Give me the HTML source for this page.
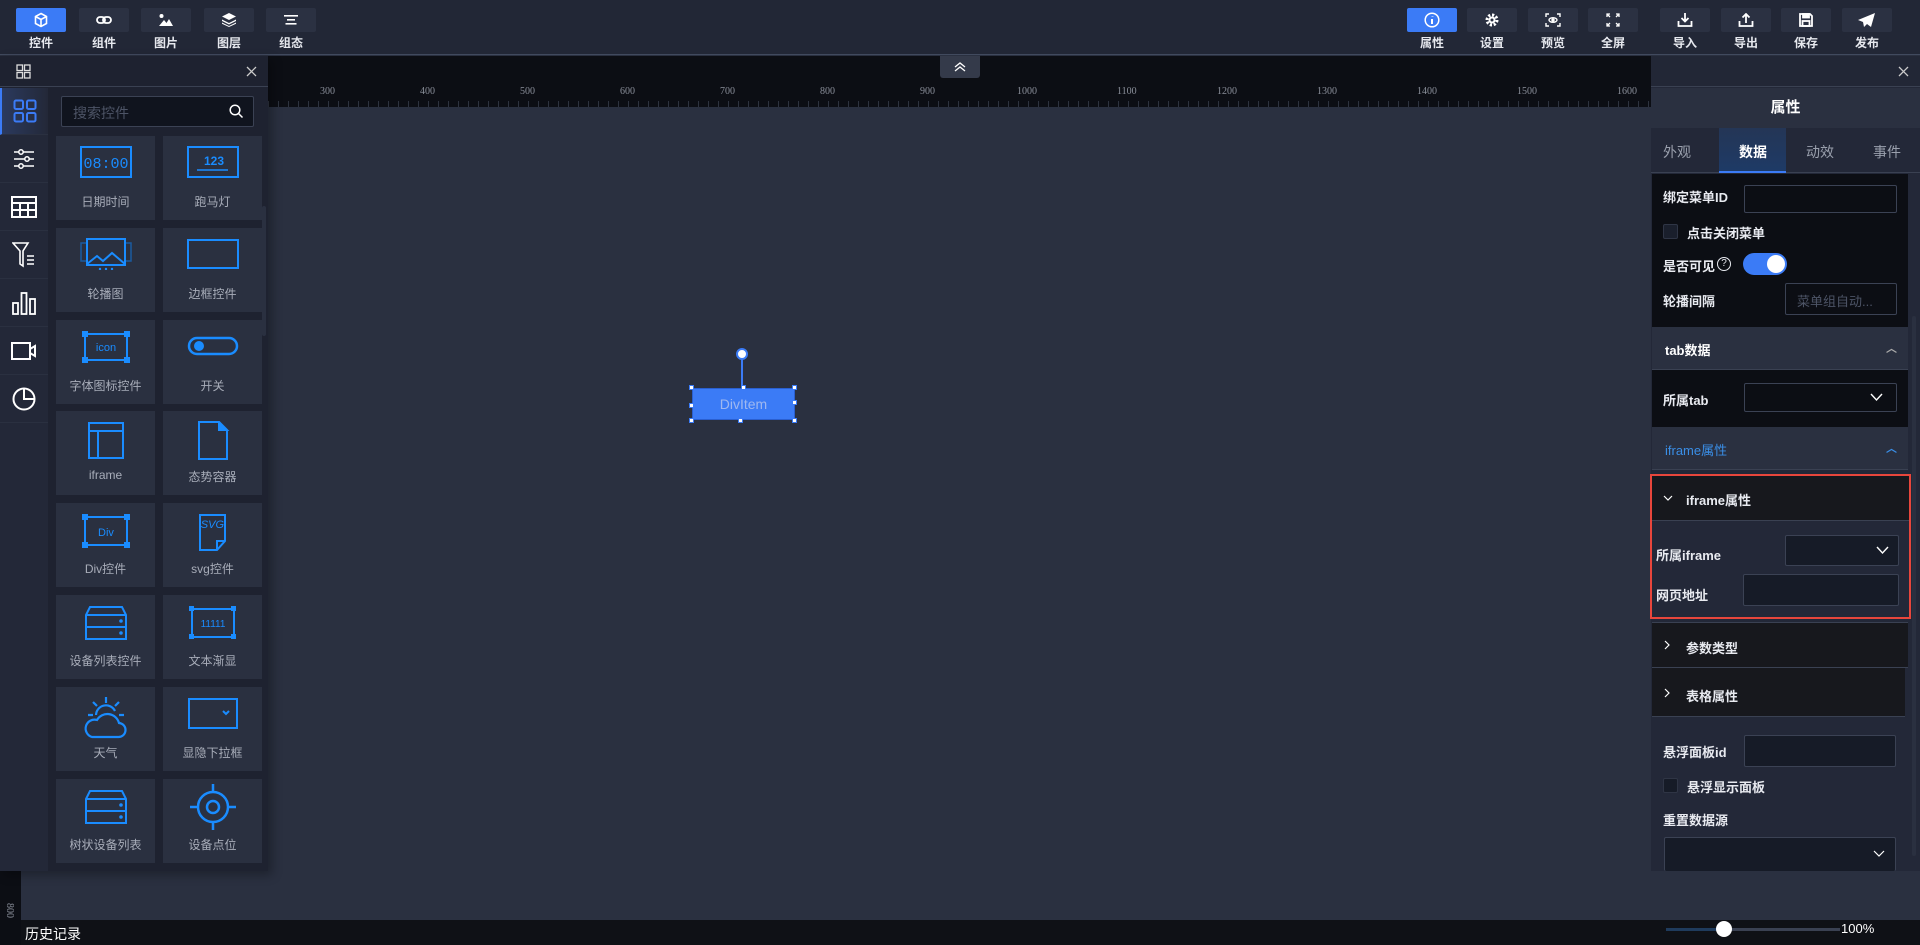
<!DOCTYPE html>
<html><head><meta charset="utf-8">
<style>
*{margin:0;padding:0;box-sizing:border-box}
body{width:1920px;height:945px;overflow:hidden;background:#2a3040;font-family:"Liberation Sans","Noto Sans CJK SC",sans-serif;color:#fff;position:relative}
.a{position:absolute}
.tb{position:absolute;top:0;left:0;width:1920px;height:55px;background:#222736;border-bottom:1px solid #414a5e}
.btn{position:absolute;top:8px;width:50px;height:24px;background:#2b3142;border-radius:2px;display:flex;align-items:center;justify-content:center}
.btn.on{background:#3b7bf6}
.lbl{position:absolute;top:34px;width:50px;text-align:center;font-size:12px;color:#e6e8ee;font-weight:bold}
.ruler{position:absolute;left:268px;top:56px;width:1383px;height:51px;background:#0c0e14}
.rn{position:absolute;top:30px;font-size:10px;color:#8a8f9a;font-family:"Liberation Serif",serif}
.lp{position:absolute;left:0;top:56px;width:268px;height:815px;background:#1e2230;box-shadow:4px 4px 10px rgba(0,0,0,.3)}
.nav{position:absolute;left:0;width:48px;height:47px;border-bottom:1px solid #2a3040;display:flex;align-items:center;justify-content:center}
.card{position:absolute;width:99px;height:84px;background:#2a3040}
.card .t{position:absolute;left:0;right:0;top:57px;text-align:center;font-size:12px;color:#a8adb9}
.card svg{position:absolute;left:50%;top:10px;transform:translateX(-50%)}
.rp{position:absolute;left:1651px;top:56px;width:269px;height:815px;background:#232838}
.lt{position:absolute;font-size:13px;color:#e8eaf0;font-weight:bold}
.inp{position:absolute;background:#161b27;border:1px solid #3b4254;border-radius:2px}
.sect{position:absolute;left:1px;width:256px;font-size:13px;font-weight:bold}
</style></head><body>

<div class="tb">
  <div class="btn on" style="left:16px"><svg width="16" height="16" viewBox="0 0 16 16" fill="none" stroke="#fff" stroke-width="1.6"><path d="M8 1.5l5.5 3v7L8 14.5 2.5 11.5v-7z M2.5 4.5L8 7.5l5.5-3 M8 7.5v7"/></svg></div><div class="lbl" style="left:16px">控件</div>
  <div class="btn" style="left:79px"><svg width="16" height="10" viewBox="0 0 16 10" fill="none" stroke="#fff" stroke-width="1.8"><rect x="1" y="2" width="8" height="6" rx="3"/><rect x="7" y="2" width="8" height="6" rx="3"/></svg></div><div class="lbl" style="left:79px">组件</div>
  <div class="btn" style="left:141px"><svg width="16" height="14" viewBox="0 0 16 14" fill="#fff"><circle cx="3.5" cy="3" r="2"/><path d="M1 13l5-6 2.5 3 2.5-4 4 7z"/></svg></div><div class="lbl" style="left:141px">图片</div>
  <div class="btn" style="left:204px"><svg width="16" height="14" viewBox="0 0 16 14" fill="#fff"><path d="M8 0l7 3.5-7 3.5-7-3.5z"/><path d="M1 6.5l7 3.5 7-3.5v1.5l-7 3.5-7-3.5z"/><path d="M1 9.5l7 3.5 7-3.5v1.3l-7 3.2-7-3.2z"/></svg></div><div class="lbl" style="left:204px">图层</div>
  <div class="btn" style="left:266px"><svg width="14" height="10" viewBox="0 0 14 10" fill="#fff"><rect x="0" y="0" width="14" height="1.6"/><rect x="3" y="4" width="8" height="1.6"/><rect x="1.5" y="8" width="11" height="1.6"/></svg></div><div class="lbl" style="left:266px">组态</div>

  <div class="btn on" style="left:1407px"><svg width="16" height="16" viewBox="0 0 16 16" fill="none" stroke="#fff" stroke-width="1.5"><circle cx="8" cy="8" r="6.8"/><path d="M8.5 4.5v.5 M8 7v5" stroke-width="2"/></svg></div><div class="lbl" style="left:1407px">属性</div>
  <div class="btn" style="left:1467px"><svg width="14" height="14" viewBox="0 0 14 14"><circle cx="7" cy="7" r="5" fill="none" stroke="#fff" stroke-width="3" stroke-dasharray="2.2 1.7"/><circle cx="7" cy="7" r="3.5" fill="#fff"/><circle cx="7" cy="7" r="1.5" fill="#2b3142"/></svg></div><div class="lbl" style="left:1467px">设置</div>
  <div class="btn" style="left:1528px"><svg width="16" height="14" viewBox="0 0 16 14" fill="none" stroke="#fff" stroke-width="1.4"><path d="M1 4V1h3 M12 1h3v3 M15 10v3h-3 M4 13H1v-3"/><ellipse cx="8" cy="7" rx="4" ry="2.3"/><circle cx="8" cy="7" r="1" fill="#fff"/></svg></div><div class="lbl" style="left:1528px">预览</div>
  <div class="btn" style="left:1588px"><svg width="14" height="14" viewBox="0 0 14 14" fill="none" stroke="#fff" stroke-width="1.3"><path d="M1 4V1h3 M1 1l3 3 M10 1h3v3 M13 1l-3 3 M13 10v3h-3 M13 13l-3-3 M4 13H1v-3 M1 13l3-3"/></svg></div><div class="lbl" style="left:1588px">全屏</div>
  <div class="btn" style="left:1660px"><svg width="16" height="14" viewBox="0 0 16 14" fill="none" stroke="#fff" stroke-width="1.8"><path d="M8 0v8 M4.5 5L8 8.5 11.5 5 M1.5 8v5h13V8"/></svg></div><div class="lbl" style="left:1660px">导入</div>
  <div class="btn" style="left:1721px"><svg width="16" height="14" viewBox="0 0 16 14" fill="none" stroke="#fff" stroke-width="1.8"><path d="M8 10V1 M4.5 4.5L8 1l3.5 3.5 M1.5 8v5h13V8"/></svg></div><div class="lbl" style="left:1721px">导出</div>
  <div class="btn" style="left:1781px"><svg width="14" height="14" viewBox="0 0 14 14" fill="none" stroke="#fff" stroke-width="1.8"><path d="M1 1h10l2 2v10H1z"/><rect x="4" y="1" width="6" height="3.5" fill="#fff"/><rect x="3.5" y="8" width="7" height="5"/></svg></div><div class="lbl" style="left:1781px">保存</div>
  <div class="btn" style="left:1842px"><svg width="18" height="14" viewBox="0 0 18 14" fill="#fff"><path d="M17 0L0 7l5 2 1 5 3-3 4 3z"/></svg></div><div class="lbl" style="left:1842px">发布</div>
</div>

<div class="ruler">
  <div class="rn" style="left:52px">300</div><div class="rn" style="left:152px">400</div><div class="rn" style="left:252px">500</div><div class="rn" style="left:352px">600</div><div class="rn" style="left:452px">700</div><div class="rn" style="left:552px">800</div><div class="rn" style="left:652px">900</div><div class="rn" style="left:749px">1000</div><div class="rn" style="left:849px">1100</div><div class="rn" style="left:949px">1200</div><div class="rn" style="left:1049px">1300</div><div class="rn" style="left:1149px">1400</div><div class="rn" style="left:1249px">1500</div><div class="rn" style="left:1349px">1600</div>
  <div class="a" style="left:0;right:0;bottom:0;height:6px;background:repeating-linear-gradient(90deg,#2e333f 0 1px,transparent 1px 10px)"></div>
</div>
<div class="a" style="left:940px;top:56px;width:40px;height:22px;background:#343a4a;border-radius:0 0 3px 3px"><svg class="a" style="left:14px;top:5px" width="12" height="12" viewBox="0 0 12 12" fill="none" stroke="#fff" stroke-width="1.3"><path d="M1 6l5-4 5 4 M1 10l5-4 5 4"/></svg></div>

<div class="a" style="left:0;top:871px;width:21px;height:50px;background:#0c0e14"></div>
<div class="a" style="left:2px;top:905px;font-size:10px;color:#8a8f9a;transform:rotate(90deg);font-family:'Liberation Serif',serif">800</div>

<div class="a" style="left:741px;top:357px;width:2px;height:31px;background:#3b7bf6"></div>
<div class="a" style="left:736px;top:348px;width:12px;height:12px;border-radius:50%;background:#fff;border:2px solid #3b7bf6"></div>
<div class="a" style="left:692px;top:388px;width:103px;height:32px;background:#3b7bf6;border:1px solid #2a5fd0;color:#9fb8f0;font-size:14px;text-align:center;line-height:30px">DivItem</div>
<div class="a" style="left:689px;top:385px;width:5px;height:5px;background:#fff;border:1px solid #3b7bf6"></div>
<div class="a" style="left:741px;top:385px;width:5px;height:5px;background:#fff;border:1px solid #3b7bf6"></div>
<div class="a" style="left:792px;top:385px;width:5px;height:5px;background:#fff;border:1px solid #3b7bf6"></div>
<div class="a" style="left:689px;top:403px;width:5px;height:5px;background:#fff;border:1px solid #3b7bf6"></div>
<div class="a" style="left:792px;top:400px;width:5px;height:5px;background:#fff;border:1px solid #3b7bf6"></div>
<div class="a" style="left:689px;top:418px;width:5px;height:5px;background:#fff;border:1px solid #3b7bf6"></div>
<div class="a" style="left:738px;top:418px;width:5px;height:5px;background:#fff;border:1px solid #3b7bf6"></div>
<div class="a" style="left:792px;top:418px;width:5px;height:5px;background:#fff;border:1px solid #3b7bf6"></div>

<div class="lp">
  <div class="a" style="left:0;top:0;width:268px;height:31px;border-bottom:1px solid #3a4152"></div>
  <svg class="a" style="left:16px;top:8px" width="15" height="15" viewBox="0 0 15 15" fill="none" stroke="#ddd" stroke-width="1.3"><rect x="1" y="1" width="5.5" height="5.5"/><rect x="8.5" y="1" width="5.5" height="5.5"/><rect x="1" y="8.5" width="5.5" height="5.5"/><rect x="8.5" y="8.5" width="5.5" height="5.5"/></svg>
  <svg class="a" style="left:246px;top:10px" width="11" height="11" viewBox="0 0 11 11" stroke="#ccc" stroke-width="1.3"><path d="M1 1l9 9M10 1l-9 9"/></svg>
  <div class="a" style="left:0;top:32px;width:48px;height:783px;background:#232838"></div>
  <div class="nav" style="top:32px;background:linear-gradient(90deg,#2b3a5e,#232838);border-left:2px solid #3b7bf6"><svg width="24" height="24" viewBox="0 0 24 24" fill="none" stroke="#3b7bf6" stroke-width="2"><rect x="1.5" y="1.5" width="8.5" height="8.5" rx="1.5"/><rect x="14" y="1.5" width="8.5" height="8.5" rx="1.5"/><rect x="1.5" y="14" width="8.5" height="8.5" rx="1.5"/><rect x="14" y="14" width="8.5" height="8.5" rx="1.5"/></svg></div>
  <div class="nav" style="top:80px"><svg width="22" height="20" viewBox="0 0 22 20" fill="none" stroke="#fff" stroke-width="1.5"><path d="M1 3h20M1 10h20M1 17h20"/><circle cx="8" cy="3" r="2.2" fill="#232838"/><circle cx="14" cy="10" r="2.2" fill="#232838"/><circle cx="8" cy="17" r="2.2" fill="#232838"/></svg></div>
  <div class="nav" style="top:128px"><svg width="26" height="22" viewBox="0 0 26 22" fill="none" stroke="#fff" stroke-width="2"><rect x="1" y="1" width="24" height="20"/><path d="M1 7h24M1 14h24M9 7v14M17 7v14"/></svg></div>
  <div class="nav" style="top:176px"><svg width="24" height="26" viewBox="0 0 24 26" fill="none" stroke="#fff" stroke-width="1.6"><path d="M1 1h15l-5 8v15l-3-2V9z M15 14h7M15 18h7M15 22h7"/></svg></div>
  <div class="nav" style="top:224px"><svg width="24" height="24" viewBox="0 0 24 24" fill="none" stroke="#fff" stroke-width="1.8"><rect x="1" y="12" width="5" height="11"/><rect x="9.5" y="2" width="5" height="21"/><rect x="18" y="8" width="5" height="15"/></svg></div>
  <div class="nav" style="top:272px"><svg width="26" height="18" viewBox="0 0 26 18" fill="none" stroke="#fff" stroke-width="2"><rect x="1" y="1" width="18" height="16"/><path d="M19 7l5-3v10l-5-3"/></svg></div>
  <div class="nav" style="top:320px"><svg width="24" height="24" viewBox="0 0 24 24" fill="none" stroke="#fff" stroke-width="2"><circle cx="12" cy="12" r="10.5"/><path d="M12 1.5V12h10.5"/></svg></div>

  <div class="a" style="left:61px;top:40px;width:193px;height:31px;background:#10141e;border:1px solid #3b4254;border-radius:2px"></div>
  <div class="a" style="left:73px;top:47px;font-size:14px;color:#4d5466">搜索控件</div>
  <svg class="a" style="left:229px;top:48px" width="15" height="15" viewBox="0 0 15 15" fill="none" stroke="#fff" stroke-width="1.5"><circle cx="6" cy="6" r="4.8"/><path d="M9.5 9.5l4 4"/></svg>

  <div class="card" style="left:56px;top:80px"><svg width="52" height="32" viewBox="0 0 52 32"><rect x="1" y="1" width="50" height="30" fill="none" stroke="#1a8cff" stroke-width="2"/><text x="26" y="22" text-anchor="middle" font-size="15" fill="#1a8cff" font-family="Liberation Mono">08:00</text></svg><div class="t">日期时间</div></div>
  <div class="card" style="left:163px;top:80px"><svg width="52" height="32" viewBox="0 0 52 32"><rect x="1" y="1" width="50" height="30" fill="none" stroke="#1a8cff" stroke-width="2"/><text x="27" y="19" text-anchor="middle" font-size="12" fill="#1a8cff" font-weight="bold">123</text><path d="M10 24h31" stroke="#1a8cff" stroke-width="1.5"/></svg><div class="t">跑马灯</div></div>

  <div class="card" style="left:56px;top:172px"><svg width="52" height="32" viewBox="0 0 52 32" fill="none"><rect x="1" y="5" width="50" height="18" stroke="#1a5aa0" stroke-width="1.5"/><rect x="7" y="1" width="38" height="26" stroke="#1a8cff" stroke-width="2" fill="#2a3040"/><path d="M7 26l10-8 6 5 9-8 13 11" stroke="#1a8cff" stroke-width="2"/><circle cx="20" cy="31" r="1.2" fill="#1a8cff"/><circle cx="26" cy="31" r="1.2" fill="#1a8cff"/><circle cx="32" cy="31" r="1.2" fill="#1a8cff"/></svg><div class="t">轮播图</div></div>
  <div class="card" style="left:163px;top:172px"><svg width="52" height="32" viewBox="0 0 52 32"><rect x="1" y="2" width="50" height="28" fill="none" stroke="#1a8cff" stroke-width="2"/></svg><div class="t">边框控件</div></div>

  <div class="card" style="left:56px;top:264px"><svg width="52" height="34" viewBox="0 0 52 34"><rect x="5" y="4" width="42" height="26" fill="none" stroke="#1a8cff" stroke-width="2"/><rect x="2" y="1" width="6" height="6" fill="#1a8cff"/><rect x="44" y="1" width="6" height="6" fill="#1a8cff"/><rect x="2" y="27" width="6" height="6" fill="#1a8cff"/><rect x="44" y="27" width="6" height="6" fill="#1a8cff"/><text x="26" y="21" text-anchor="middle" font-size="11" fill="#1a8cff">icon</text></svg><div class="t">字体图标控件</div></div>
  <div class="card" style="left:163px;top:264px"><svg width="52" height="34" viewBox="0 0 52 34"><rect x="2" y="8" width="48" height="16" rx="8" fill="none" stroke="#1a8cff" stroke-width="2.5"/><circle cx="12" cy="16" r="5" fill="#1a8cff"/></svg><div class="t">开关</div></div>

  <div class="card" style="left:56px;top:355px"><svg width="52" height="40" viewBox="0 0 52 40" fill="none" stroke="#1a8cff" stroke-width="2"><rect x="9" y="2" width="34" height="35"/><path d="M9 10h34M18 10v27"/></svg><div class="t">iframe</div></div>
  <div class="card" style="left:163px;top:355px"><svg width="52" height="40" viewBox="0 0 52 40" fill="none" stroke="#1a8cff" stroke-width="2"><path d="M12 1h20l8 8v29H12z"/><path d="M32 1l8 8h-8z" fill="#1a8cff"/></svg><div class="t">态势容器</div></div>

  <div class="card" style="left:56px;top:447px"><svg width="52" height="36" viewBox="0 0 52 36"><rect x="5" y="4" width="42" height="28" fill="none" stroke="#1a8cff" stroke-width="2"/><rect x="2" y="1" width="6" height="6" fill="#1a8cff"/><rect x="44" y="1" width="6" height="6" fill="#1a8cff"/><rect x="2" y="29" width="6" height="6" fill="#1a8cff"/><rect x="44" y="29" width="6" height="6" fill="#1a8cff"/><text x="26" y="23" text-anchor="middle" font-size="11" fill="#1a8cff">Div</text></svg><div class="t">Div控件</div></div>
  <div class="card" style="left:163px;top:447px"><svg width="52" height="40" viewBox="0 0 52 40" fill="none" stroke="#1a8cff" stroke-width="2"><path d="M13 2h25v26l-8 9H13z"/><path d="M38 28h-8v9"/><text x="37" y="15" text-anchor="end" font-size="11" fill="#1a8cff" stroke="none" font-style="italic">SVG</text></svg><div class="t">svg控件</div></div>

  <div class="card" style="left:56px;top:539px"><svg width="52" height="36" viewBox="0 0 52 36" fill="none" stroke="#1a8cff" stroke-width="2"><path d="M10 2h32l4 8v24H6V10z M6 10h40 M6 22h40"/><circle cx="41" cy="16" r="0.8" fill="#1a8cff"/><circle cx="41" cy="28" r="0.8" fill="#1a8cff"/></svg><div class="t">设备列表控件</div></div>
  <div class="card" style="left:163px;top:539px"><svg width="52" height="36" viewBox="0 0 52 36"><rect x="5" y="4" width="42" height="28" fill="none" stroke="#1a8cff" stroke-width="2"/><rect x="2" y="1" width="5" height="5" fill="#1a8cff"/><rect x="44" y="1" width="5" height="5" fill="#1a8cff"/><rect x="2" y="29" width="5" height="5" fill="#1a8cff"/><rect x="44" y="29" width="5" height="5" fill="#1a8cff"/><text x="26" y="22" text-anchor="middle" font-size="10" fill="#1a8cff">11111</text></svg><div class="t">文本渐显</div></div>

  <div class="card" style="left:56px;top:631px"><svg width="52" height="42" viewBox="0 0 52 42" fill="none" stroke="#1a8cff" stroke-width="2.2"><path d="M26 0v6 M13 5l4 4 M39 5l-4 4 M8 18h5 M39 18h5"/><path d="M16 18a10 10 0 0 1 19-4"/><path d="M12 40h26a7 7 0 0 0 1-14 12 12 0 0 0-22-3 8 8 0 0 0-5 17z"/></svg><div class="t">天气</div></div>
  <div class="card" style="left:163px;top:631px"><svg width="52" height="34" viewBox="0 0 52 34" fill="none" stroke="#1a8cff" stroke-width="2"><rect x="2" y="2" width="48" height="29"/><path d="M36 14l3 3 3-3"/></svg><div class="t">显隐下拉框</div></div>

  <div class="card" style="left:56px;top:723px"><svg width="52" height="36" viewBox="0 0 52 36" fill="none" stroke="#1a8cff" stroke-width="2"><path d="M10 2h32l4 8v24H6V10z M6 10h40 M6 22h40"/><circle cx="41" cy="16" r="0.8" fill="#1a8cff"/><circle cx="41" cy="28" r="0.8" fill="#1a8cff"/></svg><div class="t">树状设备列表</div></div>
  <div class="card" style="left:163px;top:723px"><svg width="52" height="46" viewBox="0 0 52 46" fill="none" stroke="#1a8cff" stroke-width="2.5" style="top:5px"><circle cx="26" cy="23" r="15"/><circle cx="26" cy="23" r="6"/><path d="M26 0v8 M26 38v8 M3 23h8 M41 23h8"/></svg><div class="t">设备点位</div></div>
  <div class="a" style="left:262px;top:150px;width:4px;height:130px;background:#2a3040;border-radius:2px"></div>
</div>

<div class="rp">
  <div class="a" style="left:0;top:0;width:269px;height:31px;border-bottom:1px solid #3a4152;background:#222736"></div>
  <svg class="a" style="left:247px;top:10px" width="11" height="11" viewBox="0 0 11 11" stroke="#ccc" stroke-width="1.3"><path d="M1 1l9 9M10 1l-9 9"/></svg>
  <div class="a" style="left:0;top:32px;width:269px;height:40px;background:#2a3040;text-align:center;font-size:15px;font-weight:bold;line-height:40px">属性</div>
  <div class="a" style="left:0;top:72px;width:269px;height:45px;background:#232838;border-bottom:1px solid #3a4152"></div>
  <div class="a" style="left:68px;top:72px;width:67px;height:45px;background:linear-gradient(#243656,#1e3a66);border-bottom:2px solid #3b7bf6"></div>
  <div class="a" style="left:12px;top:86px;font-size:14px;color:#9aa0ad">外观</div>
  <div class="a" style="left:88px;top:86px;font-size:14px;color:#fff;font-weight:bold">数据</div>
  <div class="a" style="left:155px;top:86px;font-size:14px;color:#9aa0ad">动效</div>
  <div class="a" style="left:222px;top:86px;font-size:14px;color:#9aa0ad">事件</div>

  <div class="a" style="left:1px;top:118px;width:256px;height:153px;background:#0c0e14"></div>
  <div class="lt" style="left:12px;top:131px">绑定菜单ID</div>
  <div class="inp" style="left:93px;top:129px;width:153px;height:28px;background:#0c0e14"></div>
  <div class="a" style="left:12px;top:168px;width:15px;height:15px;background:#1a1f2c;border:1px solid #2f3545;border-radius:2px"></div>
  <div class="lt" style="left:36px;top:167px">点击关闭菜单</div>
  <div class="lt" style="left:12px;top:200px">是否可见</div>
  <div class="a" style="left:66px;top:201px;width:14px;height:14px;border:1.3px solid #e8eaf0;border-radius:50%;font-size:10px;line-height:12px;text-align:center;color:#e8eaf0">?</div>
  <div class="a" style="left:92px;top:197px;width:44px;height:22px;border-radius:11px;background:#3b7bf6"></div>
  <div class="a" style="left:116px;top:199px;width:18px;height:18px;border-radius:50%;background:#fff"></div>
  <div class="lt" style="left:12px;top:235px">轮播间隔</div>
  <div class="inp" style="left:134px;top:227px;width:112px;height:32px;background:#0c0e14"></div>
  <div class="a" style="left:146px;top:235px;font-size:13px;color:#4d5466">菜单组自动...</div>

  <div class="sect" style="top:271px;height:43px;background:#2a3040;border-bottom:1px solid #3a4152"><span class="a" style="left:13px;top:13px;font-size:13px">tab数据</span><span class="a" style="left:234px;top:13px;color:#aaa;font-size:11px">︿</span></div>
  <div class="a" style="left:1px;top:314px;width:256px;height:57px;background:#0c0e14"></div>
  <div class="lt" style="left:12px;top:334px">所属tab</div>
  <div class="inp" style="left:93px;top:327px;width:153px;height:29px;background:#0c0e14"><svg class="a" style="left:125px;top:9px" width="13" height="9" viewBox="0 0 13 9" fill="none" stroke="#fff" stroke-width="1.4"><path d="M1 1l5.5 6L12 1"/></svg></div>
  <div class="sect" style="top:371px;height:43px;background:#2a3040;border-bottom:1px solid #3a4152"><span class="a" style="left:13px;top:13px;font-size:13px;color:#3a8ee6;font-weight:normal">iframe属性</span><span class="a" style="left:234px;top:13px;color:#3a8ee6;font-size:11px">︿</span></div>

  <div class="a" style="left:-1px;top:418px;width:261px;height:145px;border:2px solid #e8463c;background:#232838"></div>
  <div class="a" style="left:1px;top:420px;width:257px;height:45px;background:#17181d;border-bottom:1px solid #3a4152"></div>
  <svg class="a" style="left:12px;top:439px" width="10" height="7" viewBox="0 0 10 7" fill="none" stroke="#fff" stroke-width="1.2"><path d="M1 1l4 4 4-4"/></svg>
  <div class="lt" style="left:35px;top:434px">iframe属性</div>
  <div class="lt" style="left:5px;top:489px">所属iframe</div>
  <div class="inp" style="left:134px;top:479px;width:114px;height:31px"><svg class="a" style="left:90px;top:10px" width="13" height="9" viewBox="0 0 13 9" fill="none" stroke="#fff" stroke-width="1.4"><path d="M1 1l5.5 6L12 1"/></svg></div>
  <div class="lt" style="left:5px;top:529px">网页地址</div>
  <div class="inp" style="left:92px;top:518px;width:156px;height:32px"></div>

  <div class="a" style="left:1px;top:566px;width:256px;height:46px;background:#17181d;border-top:1px solid #3a4152;border-bottom:1px solid #3a4152"></div>
  <svg class="a" style="left:13px;top:584px" width="7" height="10" viewBox="0 0 7 10" fill="none" stroke="#fff" stroke-width="1.2"><path d="M1 1l4 4-4 4"/></svg>
  <div class="lt" style="left:35px;top:582px">参数类型</div>
  <div class="a" style="left:1px;top:612px;width:253px;height:49px;background:#17181d;border-bottom:1px solid #3a4152"></div>
  <svg class="a" style="left:13px;top:632px" width="7" height="10" viewBox="0 0 7 10" fill="none" stroke="#fff" stroke-width="1.2"><path d="M1 1l4 4-4 4"/></svg>
  <div class="lt" style="left:35px;top:630px">表格属性</div>

  <div class="lt" style="left:12px;top:686px">悬浮面板id</div>
  <div class="inp" style="left:93px;top:679px;width:152px;height:32px"></div>
  <div class="a" style="left:12px;top:722px;width:15px;height:15px;background:#161b27;border:1px solid #2f3545;border-radius:2px"></div>
  <div class="lt" style="left:36px;top:721px">悬浮显示面板</div>
  <div class="lt" style="left:12px;top:754px">重置数据源</div>
  <div class="inp" style="left:13px;top:781px;width:232px;height:34px;border-bottom:none"><svg class="a" style="left:208px;top:12px" width="12" height="8" viewBox="0 0 12 8" fill="none" stroke="#fff" stroke-width="1.2"><path d="M1 1l5 5 5-5"/></svg></div>
  <div class="a" style="left:261px;top:260px;width:4px;height:540px;background:#2a3040;border-radius:2px"></div>
</div>

<div class="a" style="left:21px;top:920px;width:1899px;height:25px;background:#0f1116"></div>
<div class="a" style="left:0;top:920px;width:21px;height:25px;background:#0c0e14"></div>
<div class="a" style="left:25px;top:924px;font-size:14px;color:#fff">历史记录</div>
<div class="a" style="left:1666px;top:928px;width:174px;height:3px;background:#3a4152"></div>
<div class="a" style="left:1666px;top:928px;width:58px;height:3px;background:#1f3b5c"></div>
<div class="a" style="left:1716px;top:921px;width:16px;height:16px;border-radius:50%;background:#fff"></div>
<div class="a" style="left:1841px;top:921px;font-size:13px;color:#fff">100%</div>
</body></html>
